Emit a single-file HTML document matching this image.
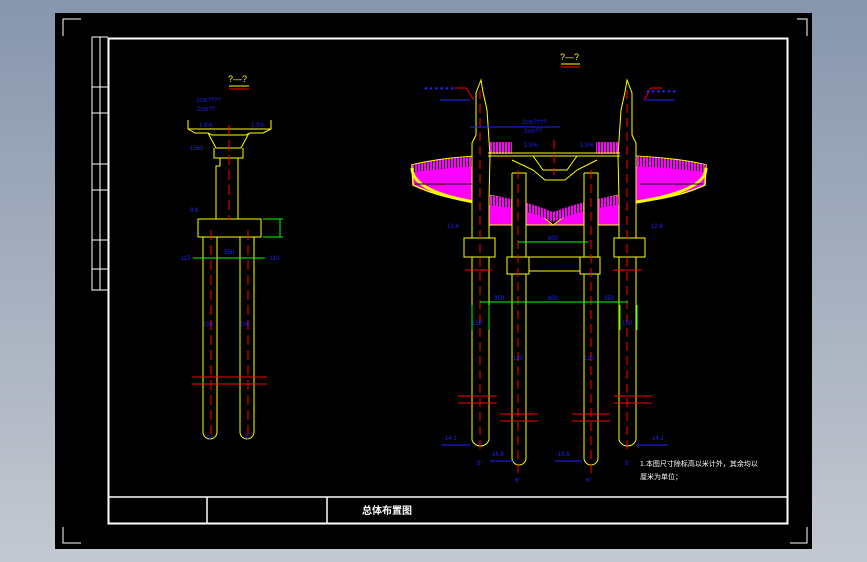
<!DOCTYPE html>
<html><head><meta charset="utf-8"><style>
html,body{margin:0;padding:0;width:867px;height:562px;overflow:hidden;background:linear-gradient(#8796ad,#c4c8d0);}
svg{position:absolute;left:0;top:0}
text{font-family:"Liberation Sans","Noto Sans CJK SC",sans-serif}
</style></head><body>
<svg width="867" height="562" viewBox="0 0 867 562">
<defs><pattern id="h" width="3" height="10" patternUnits="userSpaceOnUse"><rect width="3" height="10" fill="#f0f"/><rect width="1" height="10" fill="#000"/></pattern></defs>
<rect x="55" y="13" width="757" height="536" fill="#000"/>
<g stroke="#fff" fill="none">
<path d="M63 36V19H81M797 19H807V36M807 527V543H790M63 527V543H81" stroke-width="1"/>
<rect x="108.5" y="38.5" width="679" height="485" stroke-width="2"/>
<path d="M92 37V290H108M100 37V290M92 37H108M92 87H108M92 113H108M92 164H108M92 190H108M92 240H108M92 269H108M92 290H108"/>
<path d="M108 497H788M207 497V524M327 497V524" stroke-width="1.5"/>
</g>
<text x="362" y="514" fill="#fff" font-size="10" font-weight="bold">总体布置图</text>
<text x="640" y="466" fill="#fff" font-size="7">1.本图尺寸除标高以米计外，其余均以</text>
<text x="640" y="479" fill="#fff" font-size="7">厘米为单位；</text>

<!-- LEFT VIEW -->
<g fill="none">
<text x="228" y="82" fill="#ff0" font-size="9">?—?</text>
<path d="M229 86H249" stroke="#ff0"/><path d="M229 89H249" stroke="#f00"/>
<path d="M188 120V129H271V120M188 129L195 133H208L212 135H246L250 133H263L271 129M208 133L216 148H241L249 133M214 148V158H243V148M220 158V166H216V219M238 158V219" stroke="#ff0"/>
<rect x="198" y="219" width="63" height="18" stroke="#ff0"/>
<path d="M203 237V432A7 7 0 0 0 217 432V237M240 237V432A7 7 0 0 0 254 432V237" stroke="#ff0"/>
<path d="M229 125V220M211 230V440M248 230V440" stroke="#f00" stroke-dasharray="10 5"/>
<path d="M192 377H267M192 384H267" stroke="#f00"/>
<path d="M263 219H283M263 237H283M280 219V237M193 258H265" stroke="#0f0"/>
<g fill="#22f" font-size="6"><text x="196" y="102">2cm????</text><text x="197" y="111">2cm??</text><text x="199" y="127">1.5%</text><text x="251" y="127">1.5%</text><text x="188" y="150">-1565</text><text x="224" y="254">350</text><text x="181" y="260">115</text><text x="270" y="260">110</text><text x="190" y="212">9.8</text><text x="207" y="440">5°</text><text x="245" y="440">5°</text><text x="203" y="326">150</text><text x="240" y="326">150</text></g>
</g>

<!-- RIGHT VIEW -->
<g fill="none">
<text x="560" y="60" fill="#ff0" font-size="9">?—?</text>
<path d="M561 64H580" stroke="#ff0"/><path d="M561 67H580" stroke="#f00"/>
<!-- disks -->
<path d="M412 165Q440 158 480 156V203Q440 198 413 185Z" fill="#f0f" stroke="#ff0" stroke-width="1.5"/>
<path d="M412 165Q445 158 480 156V166Q445 168 414 172Z" fill="url(#h)"/>
<path d="M412 168Q412 192 480 203" stroke="#ff0" stroke-width="3"/>
<path d="M706 165Q678 158 630 156V203Q678 198 705 185Z" fill="#f0f" stroke="#ff0" stroke-width="1.5"/>
<path d="M706 165Q673 158 630 156V166Q673 168 704 172Z" fill="url(#h)"/>
<path d="M706 168Q706 192 630 203" stroke="#ff0" stroke-width="3"/>
<path d="M415 184H478M640 184H703" stroke="#000"/>
<path d="M488 195Q525 200 553 225Q585 200 620 195V225H488Z" fill="#f0f" stroke="#ff0"/>
<path d="M488 195Q525 200 553 212Q585 200 620 195V205Q585 208 553 222Q525 208 488 205Z" fill="url(#h)"/>
<rect x="487" y="142" width="25" height="12" fill="url(#h)"/><rect x="596" y="142" width="25" height="12" fill="url(#h)"/>
<!-- towers -->
<path d="M481 80L476 93V135L472 143V440A9 9 0 0 0 489 440V200L490 155L487 110L483 92Z" fill="#000" stroke="#ff0"/>
<path d="M627 80L632 93V135L636 143V440A9 9 0 0 1 619 440V200L618 155L621 110L625 92Z" fill="#000" stroke="#ff0"/>
<!-- deck -->
<path d="M488 153H620M488 156H620M512 160L533 170L545 180H565L577 170L597 160M533 156L543 170H567L577 156" stroke="#ff0"/>
<!-- inner piers -->
<path d="M512 173V458A7 7 0 0 0 526 458V173H512M584 173V458A7 7 0 0 0 598 458V173H584" stroke="#ff0" fill="#000"/>
<rect x="507" y="257" width="22" height="17" stroke="#ff0" fill="#000"/>
<rect x="580" y="257" width="20" height="17" stroke="#ff0" fill="#000"/>
<path d="M529 257H580M529 271H580" stroke="#ff0"/>
<rect x="464" y="238" width="31" height="19" stroke="#ff0" fill="#000"/>
<rect x="614" y="238" width="31" height="19" stroke="#ff0" fill="#000"/>
<path d="M480 90V452M627 90V452M518 170V476M591 170V476M554 140V175" stroke="#f00" stroke-dasharray="9 5"/>
<path d="M458 396H497M458 403H497M500 414H538M500 421H538M572 414H610M572 421H610M614 396H652M614 403H652" stroke="#f00"/>
<path d="M465 270H492M613 270H642" stroke="#f00"/>
<path d="M518 242H588M480 302H628" stroke="#0f0"/>
<path d="M472 305V330M489 305V330M620 305V330M637 305V330" stroke="#0f0"/>
<path d="M441 445H470M490 461H515M555 461H582M636 445H668M470 127H560M440 100H470M645 100H675" stroke="#22f"/>
<path d="M455 88H466L474 100M662 88H651L644 100" stroke="#f00"/>
<g fill="#22f" font-size="6"><text x="424" y="90">● ● ● ● ● ●</text><text x="646" y="93">● ● ● ● ● ●</text><text x="522" y="124">2cm????</text><text x="524" y="133">2cm??</text><text x="524" y="147">1.5%</text><text x="580" y="147">1.5%</text><text x="548" y="240">600</text><text x="548" y="300">600</text><text x="494" y="300">350</text><text x="604" y="300">350</text><text x="447" y="228">12.4</text><text x="651" y="228">12.4</text><text x="472" y="325">150</text><text x="622" y="325">150</text><text x="513" y="360">120</text><text x="584" y="360">120</text><text x="443" y="440">-14.1</text><text x="650" y="440">-14.1</text><text x="490" y="456">-16.8</text><text x="556" y="456">-16.8</text><text x="477" y="465">5°</text><text x="625" y="465">5°</text><text x="515" y="482">6°</text><text x="586" y="482">6°</text></g>
</g>
</svg>
</body></html>
